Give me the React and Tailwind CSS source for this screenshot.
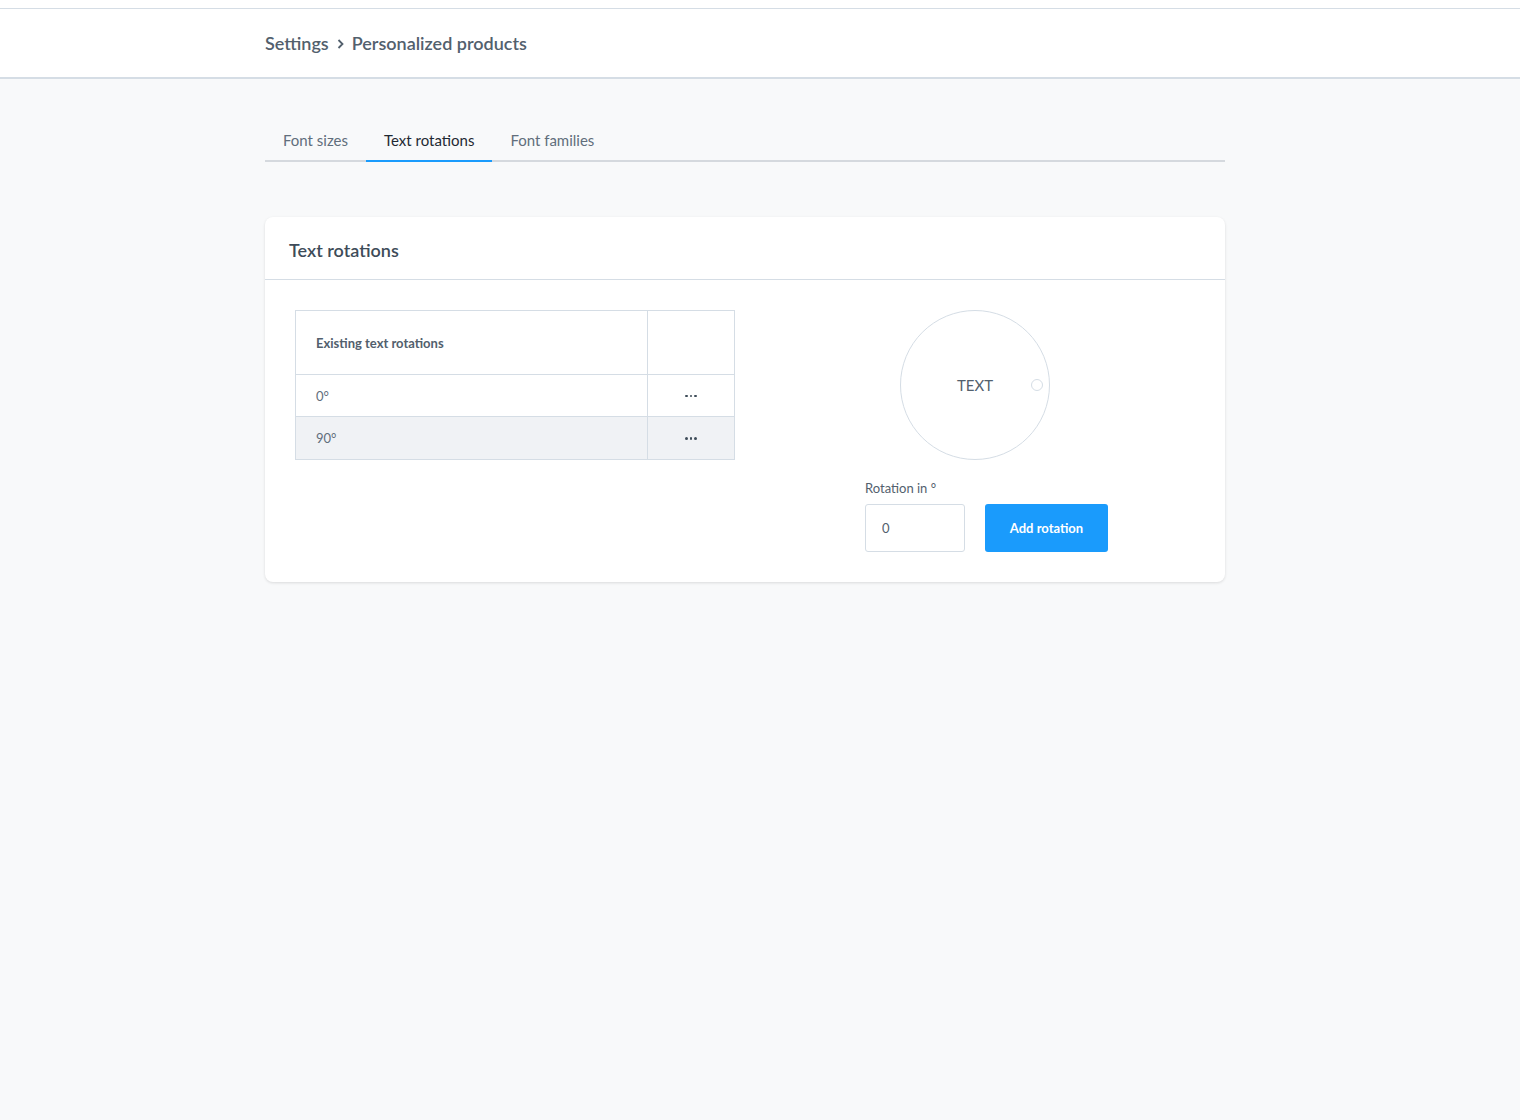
export default function App() {
  const rows = [
    { value: "0°", striped: false },
    { value: "90°", striped: true },
  ];

  return (
    <div
      className="min-h-[1120px] bg-[#f8f9fa] text-[#52606d]"
      style={{ fontFamily: "Lato, 'Noto Sans', sans-serif" }}
    >
      <div className="h-[8px] bg-white" />
      <header className="h-[71px] bg-white border-t border-[#d5dde5] border-b-2 border-b-[#d5dde5]">
        <div className="w-[960px] ml-[265px] h-full flex items-center gap-[7px] text-[18px] font-semibold text-[#52606d]">
          <span>Settings</span>
          <svg width="9" height="12" viewBox="0 0 9 12" className="mt-[1px]">
            <path d="M2.5 2 L6.5 6 L2.5 10" fill="none" stroke="#52606d" strokeWidth="1.8" />
          </svg>
          <span>Personalized products</span>
        </div>
      </header>

      <main className="w-[960px] ml-[265px] pt-[42px]">
        <nav className="flex border-b-2 border-[#d5d9de] text-[15px]">
          <button className="px-[18px] pb-[10px] pt-[8px] text-[#616e7c] -mb-[2px]">Font sizes</button>
          <button className="px-[18px] pb-[8px] pt-[8px] text-[#1f2933] border-b-2 border-[#1a9bfc] -mb-[2px]">
            Text rotations
          </button>
          <button className="px-[18px] pb-[10px] pt-[8px] text-[#616e7c] -mb-[2px]">Font families</button>
        </nav>

        <section className="mt-[55px] bg-white rounded-[8px] shadow-[0_1px_3px_rgba(0,0,0,0.12)]">
          <div className="h-[63px] px-[24px] flex items-center border-b border-[#d5dde5]">
            <h2 className="text-[18px] font-semibold text-[#3e4c59] pt-[5px]">Text rotations</h2>
          </div>

          <div className="p-[30px] flex gap-[20px]">
            <div className="w-[440px]">
              <table className="w-full border border-[#d5dde5] border-collapse text-[13px]">
                <thead>
                  <tr className="h-[64px]">
                    <th className="text-left font-bold px-[20px] pt-[4px] border border-[#d5dde5] text-[#52606d]">
                      Existing text rotations
                    </th>
                    <th className="w-[87px] border border-[#d5dde5]" />
                  </tr>
                </thead>
                <tbody>
                  {rows.map((row) => (
                    <tr
                      key={row.value}
                      className={row.striped ? "h-[43px] bg-[#f0f2f5]" : "h-[42px] bg-white"}
                    >
                      <td className="px-[20px] pt-[3px] border border-[#d5dde5] text-[#616e7c]">{row.value}</td>
                      <td className="border border-[#d5dde5]">
                        <div className="flex justify-center gap-[2px] pt-[2px]">
                          <span className="w-[2.5px] h-[2.5px] rounded-full bg-[#3e4c59]" />
                          <span className="w-[2.5px] h-[2.5px] rounded-full bg-[#3e4c59]" />
                          <span className="w-[2.5px] h-[2.5px] rounded-full bg-[#3e4c59]" />
                        </div>
                      </td>
                    </tr>
                  ))}
                </tbody>
              </table>
            </div>

            <div className="w-[440px] flex flex-col items-center">
              <div className="relative w-[150px] h-[150px] rounded-full border border-[#d5dde5] flex items-center justify-center">
                <span className="text-[15px] text-[#52606d] pt-[2px]">TEXT</span>
                <span className="absolute right-[6px] top-[68px] w-[12px] h-[12px] rounded-full border border-[#d5dde5] bg-white" />
              </div>

              <div className="w-[220px] mt-[20px]">
                <label className="block text-[13px] text-[#52606d] leading-[16px]">Rotation in °</label>
                <div className="flex gap-[20px] mt-[8px] w-[243px]">
                  <input
                    defaultValue="0"
                    className="w-[100px] h-[48px] rounded-[3px] border border-[#d5dde5] px-[16px] text-[13px] text-[#52606d] outline-none"
                  />
                  <button className="w-[123px] h-[48px] pt-[2px] rounded-[3px] bg-[#1a9bfc] text-white text-[13px] font-bold">
                    Add rotation
                  </button>
                </div>
              </div>
            </div>
          </div>
        </section>
      </main>
    </div>
  );
}
